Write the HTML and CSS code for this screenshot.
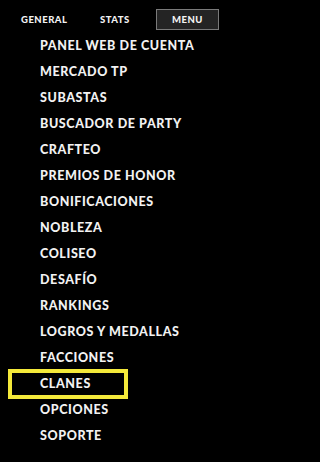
FILE: index.html
```html
<!DOCTYPE html>
<html lang="es">
<head>
<meta charset="utf-8">
<link rel="stylesheet" href="styles.css">
</head>
<body>
<nav class="tabs">
  <span class="tab tab-general">GENERAL</span>
  <span class="tab tab-stats">STATS</span>
  <span class="tab tab-menu">MENU</span>
</nav>
<ul class="menu">
  <li class="item">PANEL WEB DE CUENTA</li>
  <li class="item">MERCADO TP</li>
  <li class="item">SUBASTAS</li>
  <li class="item">BUSCADOR DE PARTY</li>
  <li class="item">CRAFTEO</li>
  <li class="item">PREMIOS DE HONOR</li>
  <li class="item">BONIFICACIONES</li>
  <li class="item">NOBLEZA</li>
  <li class="item">COLISEO</li>
  <li class="item">DESAFÍO</li>
  <li class="item">RANKINGS</li>
  <li class="item">LOGROS Y MEDALLAS</li>
  <li class="item">FACCIONES</li>
  <li class="item item-selected">CLANES</li>
  <li class="item">OPCIONES</li>
  <li class="item">SOPORTE</li>
</ul>
</body>
</html>
```
FILE: styles.css
```css
html, body {
  margin: 0;
  padding: 0;
  background: #000;
}
body {
  width: 249px;
  height: 462px;
  overflow: hidden;
  font-family: "Lato", "DejaVu Sans", sans-serif;
  font-weight: 900;
  color: #f2f2f2;
}
.tabs {
  display: flex;
  align-items: center;
  height: 21px;
  padding-top: 9px;
  padding-left: 21px;
}
.tab {
  font-size: 9.5px;
  letter-spacing: 0.5px;
  line-height: 21px;
}
.tab-general {
  width: 79px;
}
.tab-stats {
  width: 56px;
}
.tab-menu {
  box-sizing: border-box;
  width: 63px;
  height: 21px;
  line-height: 19px;
  text-align: center;
  background: #242424;
  border: 1px solid #7a7a7a;
}
.menu {
  list-style: none;
  margin: 3px 0 0 0;
  padding: 0;
}
.item {
  position: relative;
  height: 26px;
  line-height: 26px;
  padding-left: 40px;
  font-size: 12.5px;
  letter-spacing: 0.6px;
}
.item-selected::after {
  content: "";
  position: absolute;
  left: 8px;
  top: -2px;
  width: 120px;
  height: 30px;
  box-sizing: border-box;
  border: 4px solid #f4e93a;
}
```
